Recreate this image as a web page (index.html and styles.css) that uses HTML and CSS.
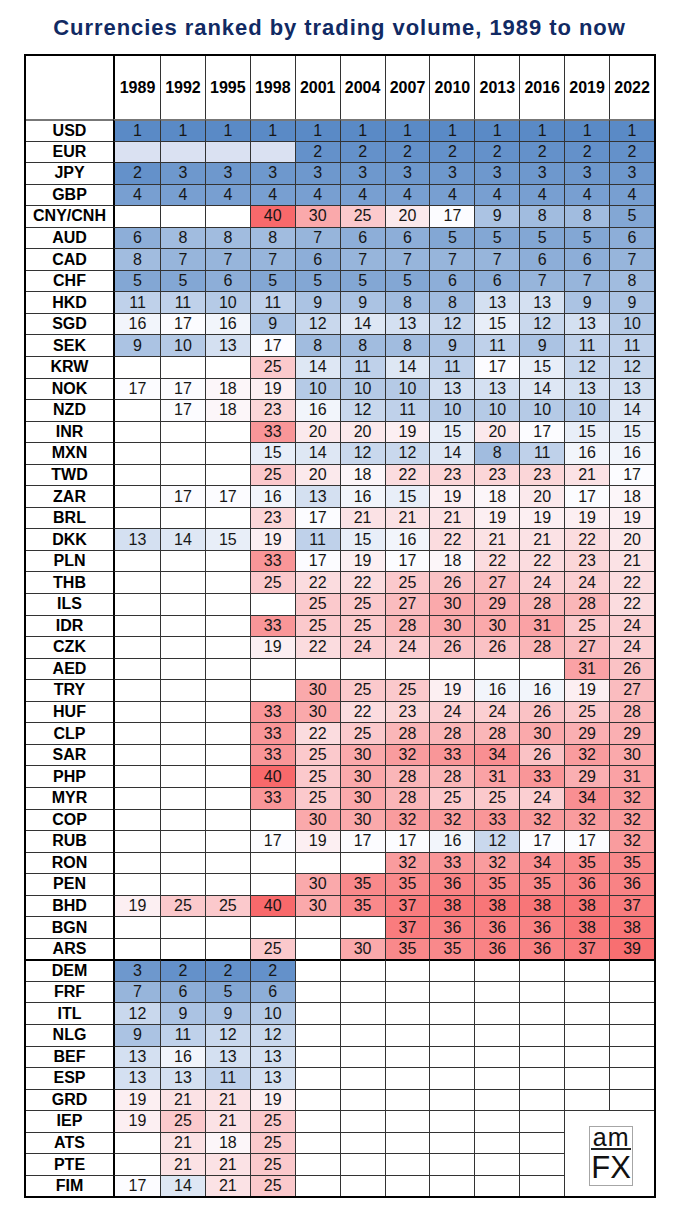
FILE: index.html
```html
<!DOCTYPE html>
<html lang="en">
<head>
<meta charset="utf-8">
<title>Currencies ranked by trading volume</title>
<link rel="stylesheet" href="styles.css">
</head>
<body>
<h1 class="title">Currencies ranked by trading volume, 1989 to now</h1>
<table class="ranks">
<colgroup><col class="c-label"><col class="c-first"><col span="11"></colgroup>
<thead>
<tr><th></th><th>1989</th><th>1992</th><th>1995</th><th>1998</th><th>2001</th><th>2004</th><th>2007</th><th>2010</th><th>2013</th><th>2016</th><th>2019</th><th>2022</th></tr>
</thead>
<tbody>
<tr><th>USD</th><td class="r1">1</td><td class="r1">1</td><td class="r1">1</td><td class="r1">1</td><td class="r1">1</td><td class="r1">1</td><td class="r1">1</td><td class="r1">1</td><td class="r1">1</td><td class="r1">1</td><td class="r1">1</td><td class="r1">1</td></tr>
<tr><th>EUR</th><td class="na"></td><td class="na"></td><td class="na"></td><td class="na"></td><td class="r2">2</td><td class="r2">2</td><td class="r2">2</td><td class="r2">2</td><td class="r2">2</td><td class="r2">2</td><td class="r2">2</td><td class="r2">2</td></tr>
<tr><th>JPY</th><td class="r2">2</td><td class="r3">3</td><td class="r3">3</td><td class="r3">3</td><td class="r3">3</td><td class="r3">3</td><td class="r3">3</td><td class="r3">3</td><td class="r3">3</td><td class="r3">3</td><td class="r3">3</td><td class="r3">3</td></tr>
<tr><th>GBP</th><td class="r4">4</td><td class="r4">4</td><td class="r4">4</td><td class="r4">4</td><td class="r4">4</td><td class="r4">4</td><td class="r4">4</td><td class="r4">4</td><td class="r4">4</td><td class="r4">4</td><td class="r4">4</td><td class="r4">4</td></tr>
<tr><th>CNY/CNH</th><td></td><td></td><td></td><td class="r40">40</td><td class="r30">30</td><td class="r25">25</td><td class="r20">20</td><td class="r17">17</td><td class="r9">9</td><td class="r8">8</td><td class="r8">8</td><td class="r5">5</td></tr>
<tr><th>AUD</th><td class="r6">6</td><td class="r8">8</td><td class="r8">8</td><td class="r8">8</td><td class="r7">7</td><td class="r6">6</td><td class="r6">6</td><td class="r5">5</td><td class="r5">5</td><td class="r5">5</td><td class="r5">5</td><td class="r6">6</td></tr>
<tr><th>CAD</th><td class="r8">8</td><td class="r7">7</td><td class="r7">7</td><td class="r7">7</td><td class="r6">6</td><td class="r7">7</td><td class="r7">7</td><td class="r7">7</td><td class="r7">7</td><td class="r6">6</td><td class="r6">6</td><td class="r7">7</td></tr>
<tr><th>CHF</th><td class="r5">5</td><td class="r5">5</td><td class="r6">6</td><td class="r5">5</td><td class="r5">5</td><td class="r5">5</td><td class="r5">5</td><td class="r6">6</td><td class="r6">6</td><td class="r7">7</td><td class="r7">7</td><td class="r8">8</td></tr>
<tr><th>HKD</th><td class="r11">11</td><td class="r11">11</td><td class="r10">10</td><td class="r11">11</td><td class="r9">9</td><td class="r9">9</td><td class="r8">8</td><td class="r8">8</td><td class="r13">13</td><td class="r13">13</td><td class="r9">9</td><td class="r9">9</td></tr>
<tr><th>SGD</th><td class="r16">16</td><td class="r17">17</td><td class="r16">16</td><td class="r9">9</td><td class="r12">12</td><td class="r14">14</td><td class="r13">13</td><td class="r12">12</td><td class="r15">15</td><td class="r12">12</td><td class="r13">13</td><td class="r10">10</td></tr>
<tr><th>SEK</th><td class="r9">9</td><td class="r10">10</td><td class="r13">13</td><td class="r17">17</td><td class="r8">8</td><td class="r8">8</td><td class="r8">8</td><td class="r9">9</td><td class="r11">11</td><td class="r9">9</td><td class="r11">11</td><td class="r11">11</td></tr>
<tr><th>KRW</th><td></td><td></td><td></td><td class="r25">25</td><td class="r14">14</td><td class="r11">11</td><td class="r14">14</td><td class="r11">11</td><td class="r17">17</td><td class="r15">15</td><td class="r12">12</td><td class="r12">12</td></tr>
<tr><th>NOK</th><td class="r17">17</td><td class="r17">17</td><td class="r18">18</td><td class="r19">19</td><td class="r10">10</td><td class="r10">10</td><td class="r10">10</td><td class="r13">13</td><td class="r13">13</td><td class="r14">14</td><td class="r13">13</td><td class="r13">13</td></tr>
<tr><th>NZD</th><td></td><td class="r17">17</td><td class="r18">18</td><td class="r23">23</td><td class="r16">16</td><td class="r12">12</td><td class="r11">11</td><td class="r10">10</td><td class="r10">10</td><td class="r10">10</td><td class="r10">10</td><td class="r14">14</td></tr>
<tr><th>INR</th><td></td><td></td><td></td><td class="r33">33</td><td class="r20">20</td><td class="r20">20</td><td class="r19">19</td><td class="r15">15</td><td class="r20">20</td><td class="r17">17</td><td class="r15">15</td><td class="r15">15</td></tr>
<tr><th>MXN</th><td></td><td></td><td></td><td class="r15">15</td><td class="r14">14</td><td class="r12">12</td><td class="r12">12</td><td class="r14">14</td><td class="r8">8</td><td class="r11">11</td><td class="r16">16</td><td class="r16">16</td></tr>
<tr><th>TWD</th><td></td><td></td><td></td><td class="r25">25</td><td class="r20">20</td><td class="r18">18</td><td class="r22">22</td><td class="r23">23</td><td class="r23">23</td><td class="r23">23</td><td class="r21">21</td><td class="r17">17</td></tr>
<tr><th>ZAR</th><td></td><td class="r17">17</td><td class="r17">17</td><td class="r16">16</td><td class="r13">13</td><td class="r16">16</td><td class="r15">15</td><td class="r19">19</td><td class="r18">18</td><td class="r20">20</td><td class="r17">17</td><td class="r18">18</td></tr>
<tr><th>BRL</th><td></td><td></td><td></td><td class="r23">23</td><td class="r17">17</td><td class="r21">21</td><td class="r21">21</td><td class="r21">21</td><td class="r19">19</td><td class="r19">19</td><td class="r19">19</td><td class="r19">19</td></tr>
<tr><th>DKK</th><td class="r13">13</td><td class="r14">14</td><td class="r15">15</td><td class="r19">19</td><td class="r11">11</td><td class="r15">15</td><td class="r16">16</td><td class="r22">22</td><td class="r21">21</td><td class="r21">21</td><td class="r22">22</td><td class="r20">20</td></tr>
<tr><th>PLN</th><td></td><td></td><td></td><td class="r33">33</td><td class="r17">17</td><td class="r19">19</td><td class="r17">17</td><td class="r18">18</td><td class="r22">22</td><td class="r22">22</td><td class="r23">23</td><td class="r21">21</td></tr>
<tr><th>THB</th><td></td><td></td><td></td><td class="r25">25</td><td class="r22">22</td><td class="r22">22</td><td class="r25">25</td><td class="r26">26</td><td class="r27">27</td><td class="r24">24</td><td class="r24">24</td><td class="r22">22</td></tr>
<tr><th>ILS</th><td></td><td></td><td></td><td></td><td class="r25">25</td><td class="r25">25</td><td class="r27">27</td><td class="r30">30</td><td class="r29">29</td><td class="r28">28</td><td class="r28">28</td><td class="r22">22</td></tr>
<tr><th>IDR</th><td></td><td></td><td></td><td class="r33">33</td><td class="r25">25</td><td class="r25">25</td><td class="r28">28</td><td class="r30">30</td><td class="r30">30</td><td class="r31">31</td><td class="r25">25</td><td class="r24">24</td></tr>
<tr><th>CZK</th><td></td><td></td><td></td><td class="r19">19</td><td class="r22">22</td><td class="r24">24</td><td class="r24">24</td><td class="r26">26</td><td class="r26">26</td><td class="r28">28</td><td class="r27">27</td><td class="r24">24</td></tr>
<tr><th>AED</th><td></td><td></td><td></td><td></td><td></td><td></td><td></td><td></td><td></td><td></td><td class="r31">31</td><td class="r26">26</td></tr>
<tr><th>TRY</th><td></td><td></td><td></td><td></td><td class="r30">30</td><td class="r25">25</td><td class="r25">25</td><td class="r19">19</td><td class="r16">16</td><td class="r16">16</td><td class="r19">19</td><td class="r27">27</td></tr>
<tr><th>HUF</th><td></td><td></td><td></td><td class="r33">33</td><td class="r30">30</td><td class="r22">22</td><td class="r23">23</td><td class="r24">24</td><td class="r24">24</td><td class="r26">26</td><td class="r25">25</td><td class="r28">28</td></tr>
<tr><th>CLP</th><td></td><td></td><td></td><td class="r33">33</td><td class="r22">22</td><td class="r25">25</td><td class="r28">28</td><td class="r28">28</td><td class="r28">28</td><td class="r30">30</td><td class="r29">29</td><td class="r29">29</td></tr>
<tr><th>SAR</th><td></td><td></td><td></td><td class="r33">33</td><td class="r25">25</td><td class="r30">30</td><td class="r32">32</td><td class="r33">33</td><td class="r34">34</td><td class="r26">26</td><td class="r32">32</td><td class="r30">30</td></tr>
<tr><th>PHP</th><td></td><td></td><td></td><td class="r40">40</td><td class="r25">25</td><td class="r30">30</td><td class="r28">28</td><td class="r28">28</td><td class="r31">31</td><td class="r33">33</td><td class="r29">29</td><td class="r31">31</td></tr>
<tr><th>MYR</th><td></td><td></td><td></td><td class="r33">33</td><td class="r25">25</td><td class="r30">30</td><td class="r28">28</td><td class="r25">25</td><td class="r25">25</td><td class="r24">24</td><td class="r34">34</td><td class="r32">32</td></tr>
<tr><th>COP</th><td></td><td></td><td></td><td></td><td class="r30">30</td><td class="r30">30</td><td class="r32">32</td><td class="r32">32</td><td class="r33">33</td><td class="r32">32</td><td class="r32">32</td><td class="r32">32</td></tr>
<tr><th>RUB</th><td></td><td></td><td></td><td class="r17">17</td><td class="r19">19</td><td class="r17">17</td><td class="r17">17</td><td class="r16">16</td><td class="r12">12</td><td class="r17">17</td><td class="r17">17</td><td class="r32">32</td></tr>
<tr><th>RON</th><td></td><td></td><td></td><td></td><td></td><td></td><td class="r32">32</td><td class="r33">33</td><td class="r32">32</td><td class="r34">34</td><td class="r35">35</td><td class="r35">35</td></tr>
<tr><th>PEN</th><td></td><td></td><td></td><td></td><td class="r30">30</td><td class="r35">35</td><td class="r35">35</td><td class="r36">36</td><td class="r35">35</td><td class="r35">35</td><td class="r36">36</td><td class="r36">36</td></tr>
<tr><th>BHD</th><td class="r19">19</td><td class="r25">25</td><td class="r25">25</td><td class="r40">40</td><td class="r30">30</td><td class="r35">35</td><td class="r37">37</td><td class="r38">38</td><td class="r38">38</td><td class="r38">38</td><td class="r38">38</td><td class="r37">37</td></tr>
<tr><th>BGN</th><td></td><td></td><td></td><td></td><td></td><td></td><td class="r37">37</td><td class="r36">36</td><td class="r36">36</td><td class="r36">36</td><td class="r38">38</td><td class="r38">38</td></tr>
<tr><th>ARS</th><td></td><td></td><td></td><td class="r25">25</td><td></td><td class="r30">30</td><td class="r35">35</td><td class="r35">35</td><td class="r36">36</td><td class="r36">36</td><td class="r37">37</td><td class="r39">39</td></tr>
<tr class="legacy-start"><th>DEM</th><td class="r3">3</td><td class="r2">2</td><td class="r2">2</td><td class="r2">2</td><td></td><td></td><td></td><td></td><td></td><td></td><td></td><td></td></tr>
<tr><th>FRF</th><td class="r7">7</td><td class="r6">6</td><td class="r5">5</td><td class="r6">6</td><td></td><td></td><td></td><td></td><td></td><td></td><td></td><td></td></tr>
<tr><th>ITL</th><td class="r12">12</td><td class="r9">9</td><td class="r9">9</td><td class="r10">10</td><td></td><td></td><td></td><td></td><td></td><td></td><td></td><td></td></tr>
<tr><th>NLG</th><td class="r9">9</td><td class="r11">11</td><td class="r12">12</td><td class="r12">12</td><td></td><td></td><td></td><td></td><td></td><td></td><td></td><td></td></tr>
<tr><th>BEF</th><td class="r13">13</td><td class="r16">16</td><td class="r13">13</td><td class="r13">13</td><td></td><td></td><td></td><td></td><td></td><td></td><td></td><td></td></tr>
<tr><th>ESP</th><td class="r13">13</td><td class="r13">13</td><td class="r11">11</td><td class="r13">13</td><td></td><td></td><td></td><td></td><td></td><td></td><td></td><td></td></tr>
<tr><th>GRD</th><td class="r19">19</td><td class="r21">21</td><td class="r21">21</td><td class="r19">19</td><td></td><td></td><td></td><td></td><td></td><td></td><td></td><td></td></tr>
<tr><th>IEP</th><td class="r19">19</td><td class="r25">25</td><td class="r21">21</td><td class="r25">25</td><td></td><td></td><td></td><td></td><td></td><td></td><td class="logo-cell" colspan="2" rowspan="4"><div class="logo"><span class="logo-am">am</span><span class="logo-fx">FX</span></div></td></tr>
<tr><th>ATS</th><td></td><td class="r21">21</td><td class="r18">18</td><td class="r25">25</td><td></td><td></td><td></td><td></td><td></td><td></td></tr>
<tr><th>PTE</th><td></td><td class="r21">21</td><td class="r21">21</td><td class="r25">25</td><td></td><td></td><td></td><td></td><td></td><td></td></tr>
<tr><th>FIM</th><td class="r17">17</td><td class="r14">14</td><td class="r21">21</td><td class="r25">25</td><td></td><td></td><td></td><td></td><td></td><td></td></tr>
</tbody>
</table>
</body>
</html>
```
FILE: styles.css
```css
* { box-sizing: border-box; }

body {
  margin: 0;
  background: #ffffff;
  font-family: "Liberation Sans", Arial, sans-serif;
  color: #141414;
}

.title {
  margin: 0;
  padding-top: 15px;
  height: 54px;
  font-size: 22px;
  line-height: 26px;
  font-weight: 700;
  letter-spacing: 0.95px;
  text-align: center;
  color: #112a63;
}

.ranks {
  margin-left: 24px;
  width: 632px;
  table-layout: fixed;
  border-collapse: separate;
  border-spacing: 0;
  border: 2px solid #000;
}

.ranks col.c-label { width: 87px; }
.ranks col.c-first { width: 47px; }

.ranks th,
.ranks td {
  padding: 0;
  border-left: 1px solid #333;
  border-top: 1px solid #333;
  text-align: center;
  vertical-align: middle;
  font-size: 16px;
  line-height: 18px;
  white-space: nowrap;
}

.ranks th { font-weight: 700; color: #000; }
.ranks td { font-weight: 400; color: #161616; }

.ranks tr > :first-child { border-left: 0; }
.ranks tr > :nth-child(2) { border-left: 2px solid #000; }

.ranks thead tr { height: 63px; }
.ranks thead th { border-top: 0; }

.ranks tbody tr { height: 21.55px; }
.ranks tbody tr:first-child > * { border-top: 2px solid #777; }
.ranks tbody tr.legacy-start > * { border-top: 2px solid #000; }

.ranks td.na { background: #dae1f2; }

/* Blue - white - red colour scale (1 = highest volume) */
.r1 { background: #5a8ac6; }
.r2 { background: #6491ca; }
.r3 { background: #6e98cd; }
.r4 { background: #789fd1; }
.r5 { background: #83a7d4; }
.r6 { background: #8daed8; }
.r7 { background: #97b5db; }
.r8 { background: #a1bcdf; }
.r9 { background: #abc3e3; }
.r10 { background: #b5cae6; }
.r11 { background: #bfd1ea; }
.r12 { background: #c9d8ed; }
.r13 { background: #d4e0f1; }
.r14 { background: #dee7f4; }
.r15 { background: #e8eef8; }
.r16 { background: #f2f5fb; }
.r17 { background: #fcfcff; }
.r18 { background: #fcf6f9; }
.r19 { background: #fceff2; }
.r20 { background: #fbe9ec; }
.r21 { background: #fbe2e5; }
.r22 { background: #fbdcdf; }
.r23 { background: #fbd6d8; }
.r24 { background: #fbcfd2; }
.r25 { background: #fbc9cc; }
.r26 { background: #fac2c5; }
.r27 { background: #fabcbf; }
.r28 { background: #fab6b8; }
.r29 { background: #faafb2; }
.r30 { background: #faa9ab; }
.r31 { background: #faa2a5; }
.r32 { background: #f99c9e; }
.r33 { background: #f99698; }
.r34 { background: #f98f92; }
.r35 { background: #f9898b; }
.r36 { background: #f98385; }
.r37 { background: #f97c7e; }
.r38 { background: #f87678; }
.r39 { background: #f86f71; }
.r40 { background: #f8696b; }

.logo-cell {
  background: #fff;
  text-align: left;
}

.logo {
  display: flex;
  flex-direction: column;
  align-items: center;
  width: 44px;
  height: 60px;
  margin: 4px 0 0 24px;
  border: 1px solid #a6a6a6;
  font-family: "Liberation Sans", Arial, sans-serif;
  color: #111;
}

.logo-am {
  width: 40px;
  font-size: 25px;
  line-height: 21px;
  letter-spacing: 1px;
  text-align: center;
  border-bottom: 2px solid #222;
}

.logo-fx {
  padding-top: 3px;
  font-size: 31px;
  line-height: 30px;
}
```
